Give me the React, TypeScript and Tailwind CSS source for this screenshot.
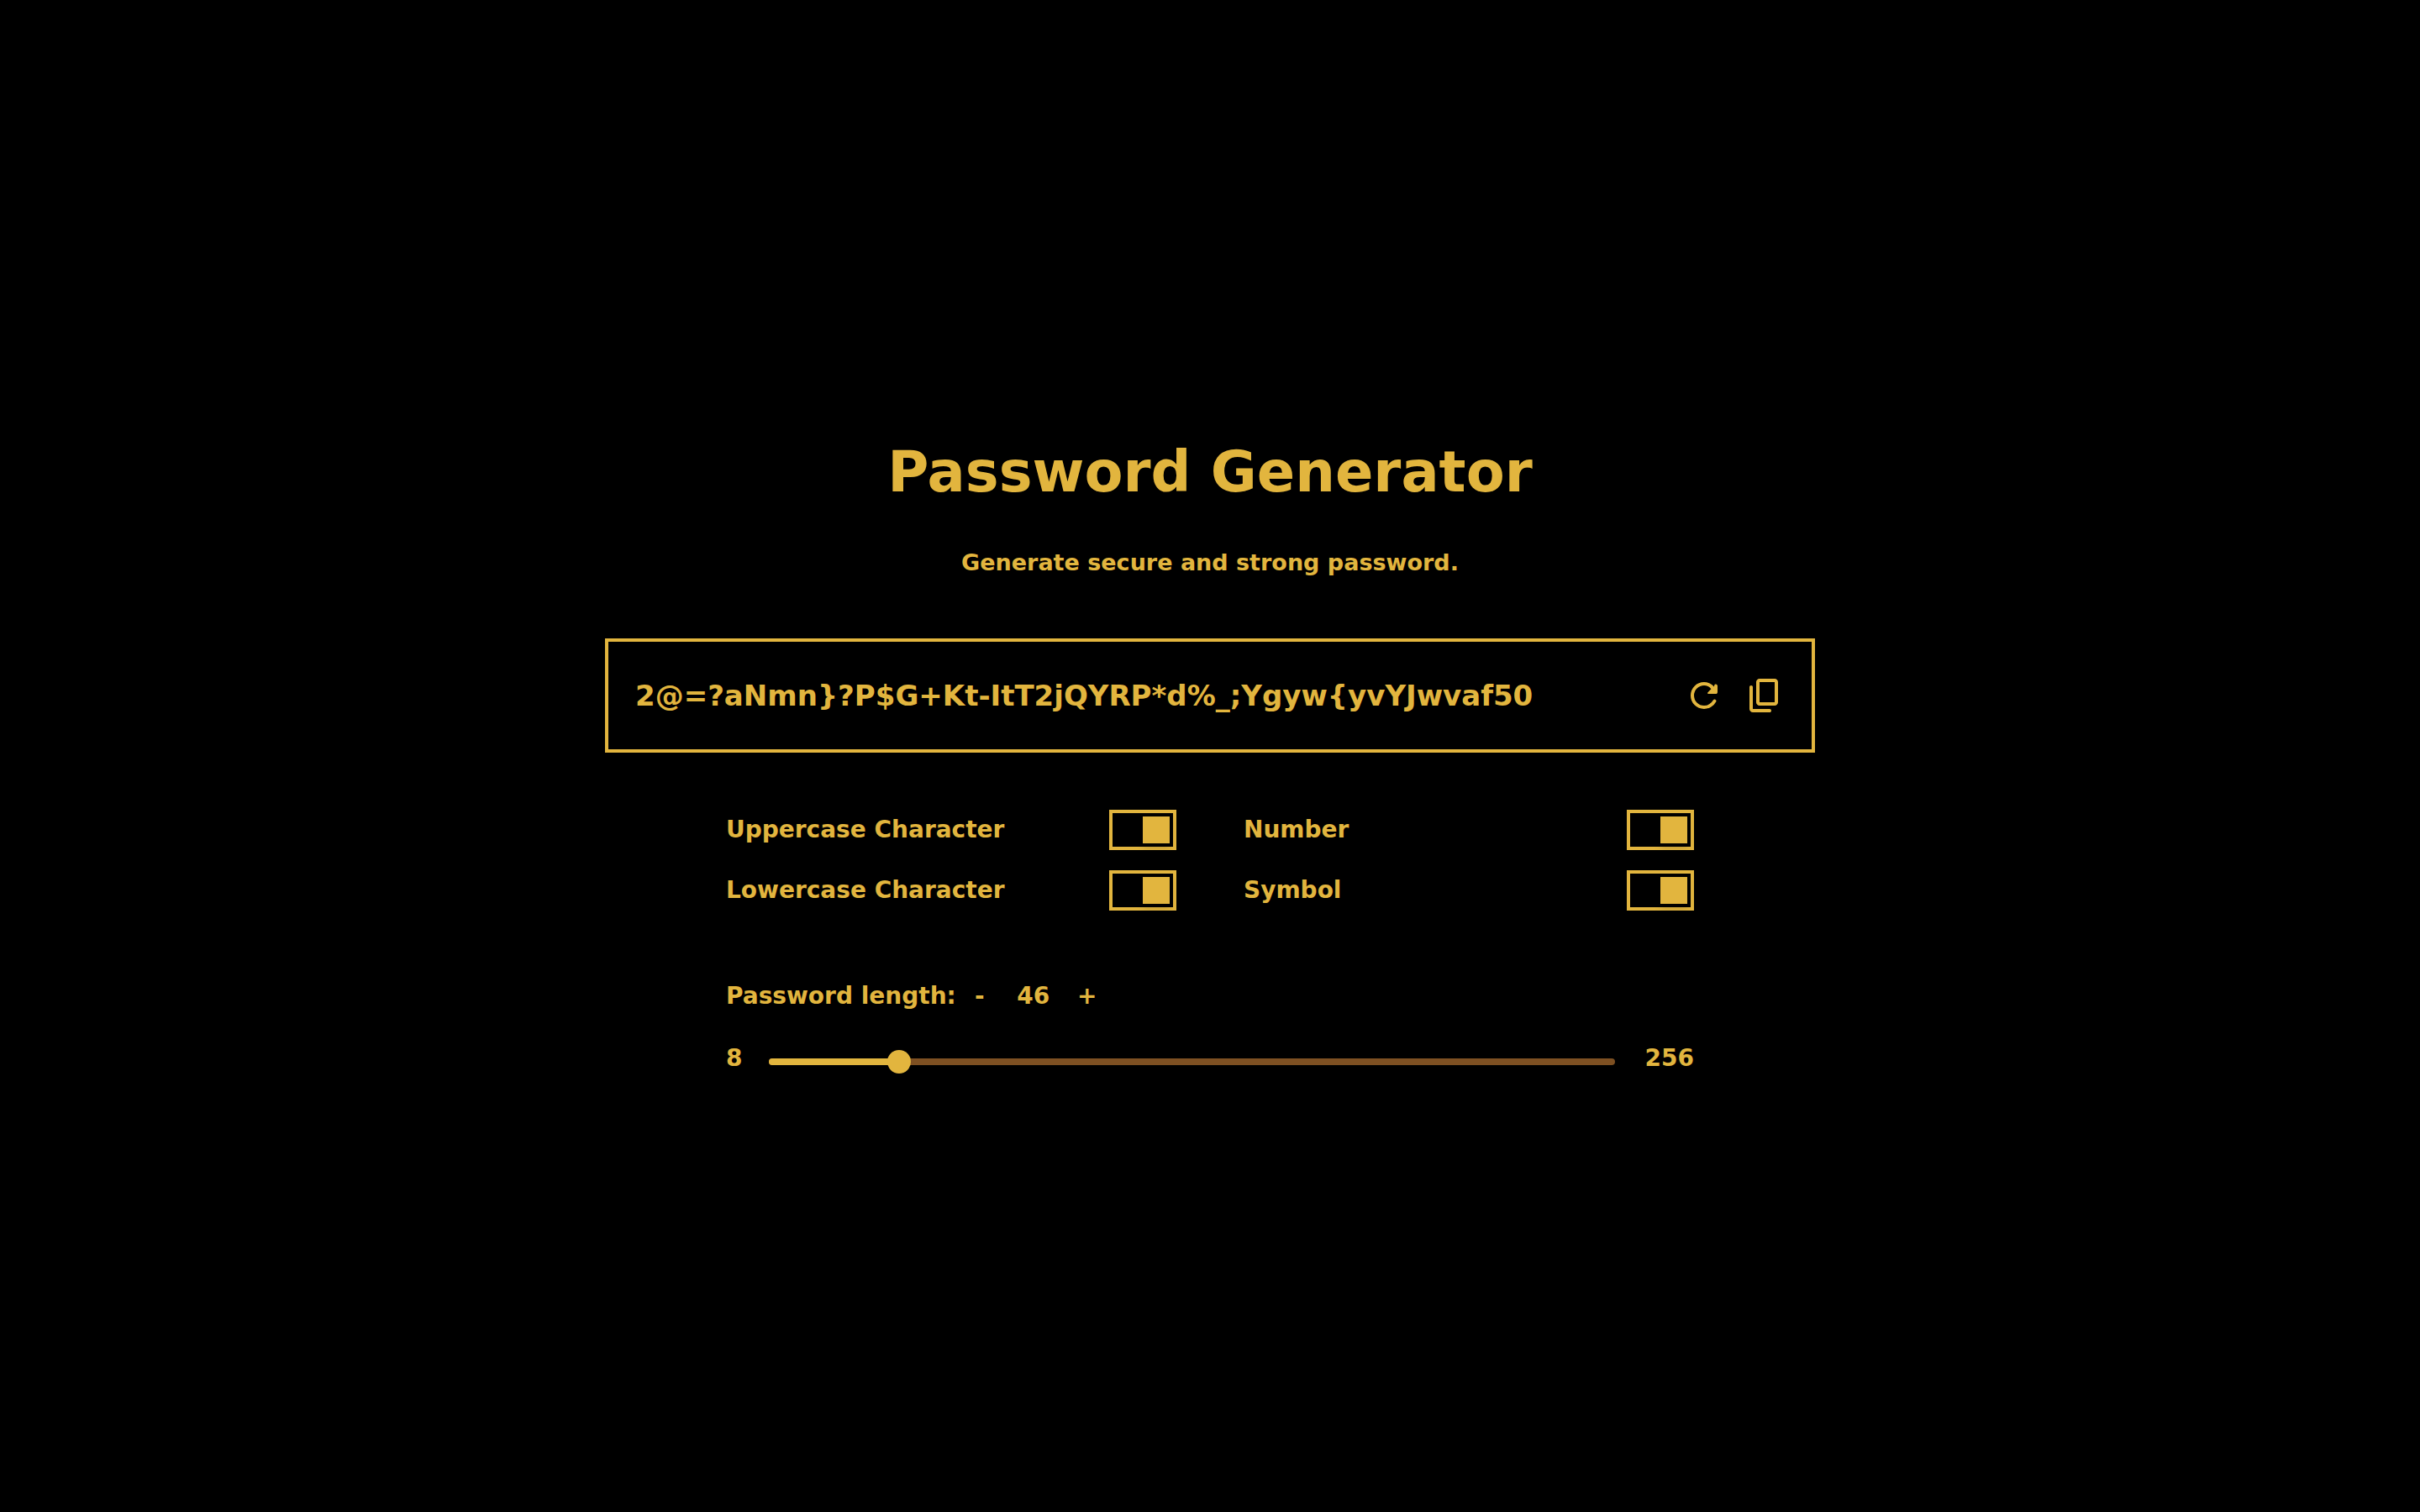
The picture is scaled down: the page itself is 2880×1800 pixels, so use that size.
import { useState } from 'react';

const MIN = 8;
const MAX = 256;

function RefreshIcon() {
  return (
    <svg viewBox="0 0 24 24" className="size-12" fill="currentColor" aria-hidden="true">
      <path d="M12 20q-3.35 0-5.675-2.325T4 12t2.325-5.675T12 4q1.725 0 3.3.713T18 6.75V6.5q0-.425.288-.963T19 5.3q.425 0 .713.288T20 6.3V10q0 .425-.288.713T19 11h-4.2q-.425 0-.713-.288T14.6 9.7l1.6-1.6q-.8-1-1.888-1.55T12 6Q9.5 6 7.75 7.75T6 12t1.75 4.25T12 18q1.7 0 3.113-.863t2.187-2.312q.2-.35.563-.488t.737-.012q.4.125.575.525t-.025.75q-1.025 2-2.925 3.2T12 20Z" />
    </svg>
  );
}

function CopyIcon() {
  return (
    <svg viewBox="0 0 24 24" className="size-12" fill="currentColor" aria-hidden="true">
      <path d="M9 18q-.825 0-1.413-.588T7 16V4q0-.825.588-1.413T9 2h9q.825 0 1.413.588T20 4v12q0 .825-.588 1.413T18 18H9Zm0-2h9V4H9v12Zm-4 6q-.825 0-1.413-.588T3 20V7q0-.425.288-.713T4 6q.425 0 .713.288T5 7v13h10q.425 0 .713.288T16 21q0 .425-.288.713T15 22H5Z" />
    </svg>
  );
}

function Toggle({ id, label }: { id: string; label: string }) {
  const [on, setOn] = useState(true);
  return (
    <div className="flex h-12 items-center justify-between">
      <label htmlFor={id} className="text-[28px] leading-10">{label}</label>
      <span className="relative flex h-12 w-20 items-center border-4 border-[#e2b53e] px-1">
        <input
          id={id}
          type="checkbox"
          role="switch"
          checked={on}
          onChange={() => setOn(!on)}
          className="peer absolute inset-0 z-10 cursor-pointer appearance-none"
        />
        <span className="size-8 bg-[#e2b53e] shadow-[0_4px_8px_rgba(0,0,0,0.2)] peer-checked:ml-auto" />
      </span>
    </div>
  );
}

export default function App() {
  const [length, setLength] = useState(46);
  const clamp = (n: number) => setLength(Math.min(MAX, Math.max(MIN, n)));
  const percent = ((length - MIN) / (MAX - MIN)) * 100;

  return (
    <main className="flex min-h-screen flex-col items-center justify-center bg-black font-['DejaVu_Sans',sans-serif] font-bold text-[#e2b53e]">
      <h1 className="text-[67px] leading-[80px]">Password Generator</h1>
      <p className="mt-12 text-[27px] leading-10">Generate secure and strong password.</p>

      <section className="mt-[70px] flex h-[136px] w-1/2 items-center gap-6 border-4 border-[#e2b53e] px-8">
        <input
          aria-label="Generated password"
          readOnly
          value="2@=?aNmn}?P$G+Kt-ItT2jQYRP*d%_;Ygyw{yvYJwvaf50"
          className="min-w-0 flex-1 bg-transparent text-[34px] leading-12 outline-none"
        />
        <button type="button" aria-label="Generate new password"><RefreshIcon /></button>
        <button type="button" aria-label="Copy password"><CopyIcon /></button>
      </section>

      <section className="mt-[68px] grid w-2/5 grid-cols-2 gap-x-20 gap-y-6">
        <Toggle id="uppercase" label="Uppercase Character" />
        <Toggle id="number" label="Number" />
        <Toggle id="lowercase" label="Lowercase Character" />
        <Toggle id="symbol" label="Symbol" />
      </section>

      <section className="mt-[82px] w-2/5 text-[28px]">
        <div className="flex h-10 items-center leading-10">
          <label htmlFor="length" className="mr-1">Password length:</label>
          <button type="button" aria-label="Decrease length" className="w-12" onClick={() => clamp(length - 1)}>-</button>
          <input
            id="length"
            type="text"
            inputMode="numeric"
            value={length}
            onChange={(e) => clamp(Number(e.target.value) || MIN)}
            className="w-20 bg-transparent text-center outline-none"
          />
          <button type="button" aria-label="Increase length" className="w-12" onClick={() => clamp(length + 1)}>+</button>
        </div>

        <div className="mt-9 flex items-end leading-9">
          <span>{MIN}</span>
          <div className="relative mr-9 ml-8 flex h-7 flex-1 items-center">
            <div className="h-2 w-full overflow-hidden rounded-full bg-[#7e5022]">
              <div className="h-full bg-[#e2b53e]" style={{ width: `${percent}%` }} />
            </div>
            <input
              type="range"
              aria-label="Password length"
              min={MIN}
              max={MAX}
              value={length}
              onChange={(e) => clamp(Number(e.target.value))}
              className="absolute inset-y-0 -left-3.5 w-[calc(100%+28px)] cursor-pointer appearance-none bg-transparent [&::-webkit-slider-thumb]:size-7 [&::-webkit-slider-thumb]:appearance-none [&::-webkit-slider-thumb]:rounded-full [&::-webkit-slider-thumb]:bg-[#e2b53e]"
            />
          </div>
          <span>{MAX}</span>
        </div>
      </section>
    </main>
  );
}
